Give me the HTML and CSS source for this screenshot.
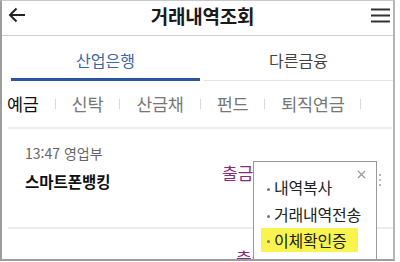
FILE: index.html
```html
<!DOCTYPE html>
<html lang="ko">
<head>
<meta charset="utf-8">
<link rel="stylesheet" href="styles.css">
</head>
<body>
<div class="frame">
  <header class="header">
    <svg class="back" width="18" height="16" viewBox="0 0 18 16"><path d="M17 8H2M8.5 1.5L2 8l6.5 6.5" fill="none" stroke="#222" stroke-width="2"/></svg>
    <h1 class="title">거래내역조회</h1>
    <svg class="menu" width="19" height="15" viewBox="0 0 19 15"><path d="M0 1.5h19M0 7.5h19M0 13.5h19" stroke="#333" stroke-width="2"/></svg>
  </header>
  <nav class="tabs">
    <div class="tab active">산업은행</div>
    <div class="tab">다른금융</div>
  </nav>
  <div class="subtabs">
    <span class="sub on">예금</span><span class="sep"></span>
    <span class="sub">신탁</span><span class="sep"></span>
    <span class="sub">산금채</span><span class="sep"></span>
    <span class="sub">펀드</span><span class="sep"></span>
    <span class="sub">퇴직연금</span><span class="sep"></span>
  </div>
  <div class="item">
    <div class="item-left">
      <div class="meta">13:47 영업부</div>
      <div class="name">스마트폰뱅킹</div>
    </div>
    <div class="kind">출금</div>
    <div class="dots"><i></i><i></i><i></i></div>
  </div>
  <div class="item next">
    <div class="kind2">출금</div>
  </div>
  <div class="popup">
    <svg class="close" width="9" height="9" viewBox="0 0 9 9"><path d="M1 1l7 7M8 1L1 8" stroke="#999" stroke-width="1.3"/></svg>
    <ul class="plist">
      <li>내역복사</li>
      <li>거래내역전송</li>
      <li class="hl">이체확인증</li>
    </ul>
  </div>
</div>
</body>
</html>
```
FILE: styles.css
```css
* { box-sizing: border-box; margin: 0; padding: 0; }
html, body { width: 400px; height: 262px; overflow: hidden; background: #fff; }
body { font-family: "Noto Sans CJK KR", "Noto Sans", sans-serif; color: #222; }
.frame {
  position: relative;
  width: 395px; height: 261px;
  border-left: 2px solid #9d9d9d;
  border-right: 2px solid #b5b5b5;
  border-bottom: 2px solid #9d9d9d;
  border-top: 1px solid #c8c8c8;
  overflow: hidden;
}
.header {
  height: 35px;
  display: flex; align-items: center; justify-content: space-between;
  padding: 0 3px 6px 6px;
  border-bottom: 1px solid #cfcfcf;
}
.title { font-size: 19px; font-weight: 700; color: #1a1a1a; letter-spacing: -0.2px; margin-left: 8px; }
.tabs { display: flex; height: 45px; }
.tab {
  flex: 1; display: flex; align-items: center; justify-content: center;
  font-size: 16px; color: #444; border-bottom: 1px solid #e3e3e3;
  padding-top: 3px;
}
.tab.active { color: #3c67a6; border-bottom: 3px solid #2b55a1; margin: 0 4px 0 9px; padding-top: 5px; }
.subtabs {
  display: flex; align-items: center; height: 48px;
  margin: 0 1px 0 6px; border-bottom: 2px solid #ededed;
  padding-bottom: 1px;
}
.sub { font-size: 17.5px; color: #777; letter-spacing: -0.3px; white-space: nowrap; }
.sub.on { color: #111; margin-left: -1px; }
.sep { width: 1px; height: 10px; background: #d8d8d8; margin: 0 16px; }
.item {
  position: relative;
  height: 100px; display: flex; align-items: flex-start;
  margin-left: 6px; border-bottom: 2px solid #ececec;
  padding: 15px 0 0 17px;
}
.item-left { width: 197px; }
.meta { font-size: 14px; color: #666; line-height: 18px; }
.name { font-size: 15.5px; font-weight: 700; color: #111; margin-top: 8px; }
.kind { font-size: 17px; color: #8a2c7d; margin-top: 16px; }
.dots { position: absolute; right: 12px; top: 45px; display: flex; flex-direction: column; gap: 3px; }
.dots i { width: 2px; height: 2px; background: #bbb; display: block; }
.item.next { border-bottom: none; height: 40px; padding: 16px 0 0 228px; }
.kind2 { font-size: 17px; color: #8a2c7d; }
.popup {
  position: absolute; left: 251px; top: 160px;
  width: 124px; height: 110px;
  background: #fff; border: 1px solid #999;
  padding: 12px 0 0 7px;
}
.close { position: absolute; right: 10px; top: 8px; }
.plist { list-style: none; }
.plist li {
  font-size: 16px; color: #222; height: 27px; line-height: 27px;
  padding-left: 13px; position: relative; letter-spacing: -0.2px; white-space: nowrap;
}
.plist li::before {
  content: ""; position: absolute; left: 6px; top: 14px;
  width: 3px; height: 3px; border-radius: 50%; background: #777;
}
.plist li.hl { background: #f9f34f; width: 97px; height: 24px; line-height: 24px; }
.plist li.hl::before { top: 12px; }
```
